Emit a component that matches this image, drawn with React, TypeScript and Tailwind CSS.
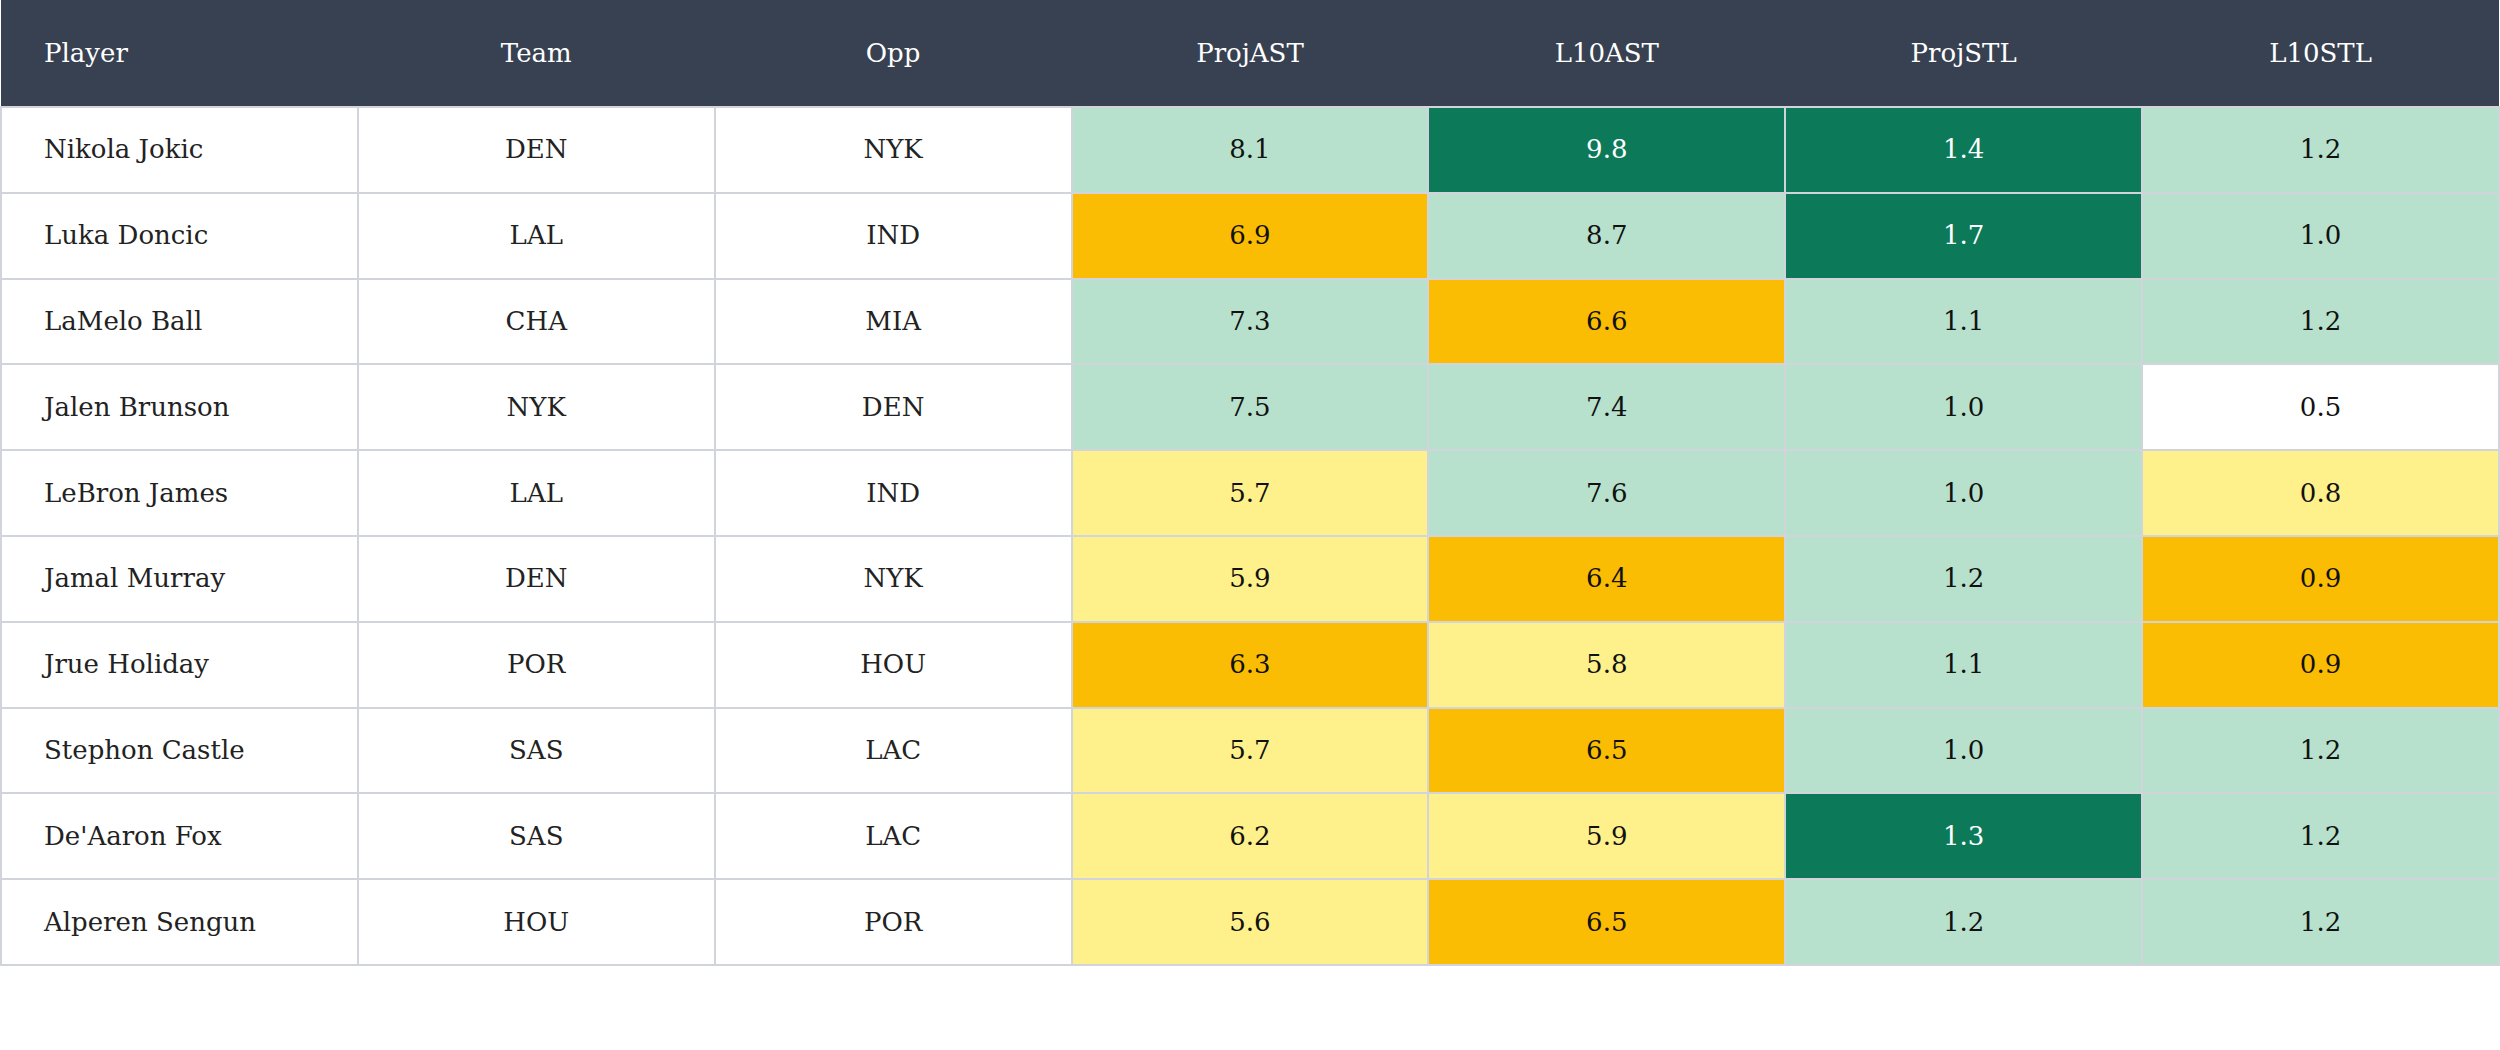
import React from "react";

type C = "lg" | "dg" | "am" | "ly" | "w";

const bg: Record<C, string> = {
  lg: "bg-[#b7e1cd] text-[#111]",
  dg: "bg-[#0c7a59] text-white",
  am: "bg-[#fbbc04] text-[#111]",
  ly: "bg-[#fef08a] text-[#111]",
  w: "bg-white text-[#111]",
};

const rows: [string, string, string, [string, C][]][] = [
  ["Nikola Jokic", "DEN", "NYK", [["8.1", "lg"], ["9.8", "dg"], ["1.4", "dg"], ["1.2", "lg"]]],
  ["Luka Doncic", "LAL", "IND", [["6.9", "am"], ["8.7", "lg"], ["1.7", "dg"], ["1.0", "lg"]]],
  ["LaMelo Ball", "CHA", "MIA", [["7.3", "lg"], ["6.6", "am"], ["1.1", "lg"], ["1.2", "lg"]]],
  ["Jalen Brunson", "NYK", "DEN", [["7.5", "lg"], ["7.4", "lg"], ["1.0", "lg"], ["0.5", "w"]]],
  ["LeBron James", "LAL", "IND", [["5.7", "ly"], ["7.6", "lg"], ["1.0", "lg"], ["0.8", "ly"]]],
  ["Jamal Murray", "DEN", "NYK", [["5.9", "ly"], ["6.4", "am"], ["1.2", "lg"], ["0.9", "am"]]],
  ["Jrue Holiday", "POR", "HOU", [["6.3", "am"], ["5.8", "ly"], ["1.1", "lg"], ["0.9", "am"]]],
  ["Stephon Castle", "SAS", "LAC", [["5.7", "ly"], ["6.5", "am"], ["1.0", "lg"], ["1.2", "lg"]]],
  ["De'Aaron Fox", "SAS", "LAC", [["6.2", "ly"], ["5.9", "ly"], ["1.3", "dg"], ["1.2", "lg"]]],
  ["Alperen Sengun", "HOU", "POR", [["5.6", "ly"], ["6.5", "am"], ["1.2", "lg"], ["1.2", "lg"]]],
];

const heads = ["Player", "Team", "Opp", "ProjAST", "L10AST", "ProjSTL", "L10STL"];

export default function App() {
  return (
    <div className="w-[2500px] min-h-[1050px] bg-white" style={{ fontFamily: '"DejaVu Serif", "Liberation Serif", serif' }}>
      <table className="w-full table-fixed border-collapse text-[26px]">
        <thead>
          <tr className="bg-[#374151] text-white">
            {heads.map((h, i) => (
              <th
                key={h}
                className={`h-[107px] border-b-2 border-[#d1d5db] font-normal ${i === 0 ? "text-left pl-[43px]" : "text-center"}`}
              >
                {h}
              </th>
            ))}
          </tr>
        </thead>
        <tbody>
          {rows.map(([name, team, opp, vals]) => (
            <tr key={name}>
              <td className="h-[85.8px] border-2 border-[#d1d5db] pl-[42px] text-left text-[#222] bg-white">{name}</td>
              <td className="h-[85.8px] border-2 border-[#d1d5db] text-center text-[#222] bg-white">{team}</td>
              <td className="h-[85.8px] border-2 border-[#d1d5db] text-center text-[#222] bg-white">{opp}</td>
              {vals.map(([v, c], j) => (
                <td key={j} className={`h-[85.8px] border-2 border-[#d1d5db] text-center ${bg[c]}`}>
                  {v}
                </td>
              ))}
            </tr>
          ))}
        </tbody>
      </table>
    </div>
  );
}
